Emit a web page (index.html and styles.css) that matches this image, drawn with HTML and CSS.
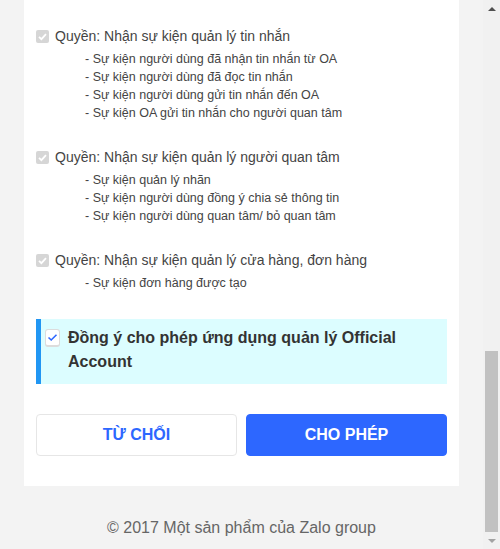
FILE: index.html
```html
<!DOCTYPE html>
<html lang="vi">
<head>
<meta charset="utf-8">
<title>Zalo OA</title>
<link rel="stylesheet" href="styles.css">
</head>
<body>
<div class="page">
  <main class="main">
    <section class="card">
      <div class="group">
        <div class="perm">
          <span class="cb-disabled"><svg width="13" height="13" viewBox="0 0 13 13"><path d="M3 6.8 L5.4 9.2 L10 4.2" fill="none" stroke="#fff" stroke-width="1.8"/></svg></span>
          <span>Quyền: Nhận sự kiện quản lý tin nhắn</span>
        </div>
        <ul class="items">
          <li>- Sự kiện người dùng đã nhận tin nhắn từ OA</li>
          <li>- Sự kiện người dùng đã đọc tin nhắn</li>
          <li>- Sự kiện người dùng gửi tin nhắn đến OA</li>
          <li>- Sự kiện OA gửi tin nhắn cho người quan tâm</li>
        </ul>
      </div>
      <div class="group">
        <div class="perm">
          <span class="cb-disabled"><svg width="13" height="13" viewBox="0 0 13 13"><path d="M3 6.8 L5.4 9.2 L10 4.2" fill="none" stroke="#fff" stroke-width="1.8"/></svg></span>
          <span>Quyền: Nhận sự kiện quản lý người quan tâm</span>
        </div>
        <ul class="items">
          <li>- Sự kiện quản lý nhãn</li>
          <li>- Sự kiện người dùng đồng ý chia sẻ thông tin</li>
          <li>- Sự kiện người dùng quan tâm/ bỏ quan tâm</li>
        </ul>
      </div>
      <div class="group">
        <div class="perm">
          <span class="cb-disabled"><svg width="13" height="13" viewBox="0 0 13 13"><path d="M3 6.8 L5.4 9.2 L10 4.2" fill="none" stroke="#fff" stroke-width="1.8"/></svg></span>
          <span>Quyền: Nhận sự kiện quản lý cửa hàng, đơn hàng</span>
        </div>
        <ul class="items">
          <li>- Sự kiện đơn hàng được tạo</li>
        </ul>
      </div>

      <div class="agree">
        <span class="cb-agree"><svg width="13" height="13" viewBox="0 0 13 13"><path d="M2.5 6.5 L5.2 9 L10.5 3.8" fill="none" stroke="#2d67ff" stroke-width="1.6"/></svg></span>
        <span class="agree-text">Đồng ý cho phép ứng dụng quản lý Official Account</span>
      </div>

      <div class="actions">
        <button class="btn btn-deny">TỪ CHỐI</button>
        <button class="btn btn-allow">CHO PHÉP</button>
      </div>
    </section>
    <footer class="footer">© 2017 Một sản phẩm của Zalo group</footer>
  </main>
  <div class="scrollbar">
    <div class="sb-btn"><span class="arrow-up"></span></div>
    <div class="sb-track"></div>
    <div class="sb-thumb"></div>
    <div class="sb-btn"><span class="arrow-down"></span></div>
  </div>
</div>
</body>
</html>
```

FILE: styles.css
```css
* { box-sizing: border-box; }
html, body { margin: 0; padding: 0; }
body {
  font-family: "Liberation Sans", Arial, sans-serif;
  color: #333;
  background: #f3f3f3;
}
.page {
  display: flex;
  height: 549px;
  overflow: hidden;
}
.main {
  flex: 1;
  background: #f3f3f3;
  display: flex;
  flex-direction: column;
  align-items: center;
}
.card {
  width: 435px;
  background: #fff;
  padding: 26px 12px 30px;
}
.group { margin-bottom: 25px; }
.perm {
  display: flex;
  align-items: center;
  gap: 6px;
  font-size: 14px;
  line-height: 20px;
  color: #444;
}
.cb-disabled {
  width: 13px;
  height: 13px;
  border-radius: 2px;
  background: #d6d6d6;
  display: flex;
}
.items {
  list-style: none;
  margin: 4px 0 0;
  padding: 0 0 0 49px;
  font-size: 12.5px;
  line-height: 18px;
  color: #444;
}
.agree {
  display: flex;
  align-items: flex-start;
  gap: 8px;
  background: #dcfdff;
  border-left: 5px solid #2196f3;
  padding: 7px 12px 10px 4px;
  margin-top: 27px;
}
.cb-agree {
  flex: none;
  width: 15px;
  height: 18px;
  margin-top: 3px;
  background: #fff;
  border: 1px solid #dcdcdc;
  border-bottom-width: 2px;
  border-radius: 3px;
  display: flex;
  align-items: center;
  justify-content: center;
}
.agree-text {
  font-size: 16px;
  font-weight: bold;
  line-height: 24px;
  color: #333;
}
.actions {
  display: grid;
  grid-template-columns: 1fr 1fr;
  gap: 9px;
  margin-top: 30px;
}
.btn {
  height: 42px;
  border-radius: 4px;
  font-family: "Liberation Sans", Arial, sans-serif;
  font-size: 16px;
  font-weight: bold;
  cursor: pointer;
}
.btn-deny {
  background: #fff;
  border: 1px solid #e6e6e6;
  color: #2d67ff;
}
.btn-allow {
  background: #2d67ff;
  border: 1px solid #2d67ff;
  color: #fff;
}
.footer {
  margin-top: 33px;
  font-size: 16px;
  line-height: 18px;
  color: #666;
}
.scrollbar {
  width: 17px;
  flex: none;
  background: #f1f1f1;
  display: flex;
  flex-direction: column;
}
.sb-btn {
  height: 17px;
  display: flex;
  align-items: center;
  justify-content: center;
}
.sb-track { flex: 1; }
.sb-thumb {
  height: 181px;
  margin: 0 2px;
  background: #c1c1c1;
}
.arrow-up {
  width: 0; height: 0;
  border-left: 4px solid transparent;
  border-right: 4px solid transparent;
  border-bottom: 4px solid #505050;
}
.arrow-down {
  width: 0; height: 0;
  border-left: 4px solid transparent;
  border-right: 4px solid transparent;
  border-top: 4px solid #a3a3a3;
}
```
